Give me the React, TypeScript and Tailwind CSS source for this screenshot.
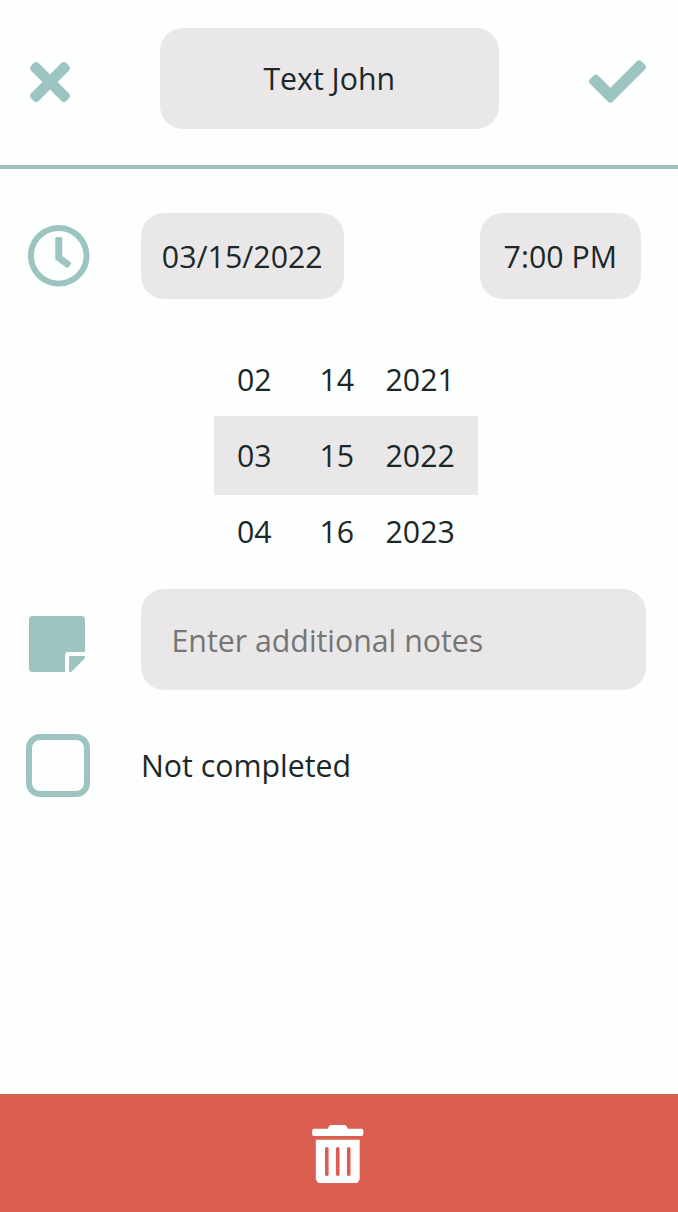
import React from "react";
import { FaCheck, FaRegClock, FaStickyNote, FaTimes, FaTrashAlt } from "react-icons/fa";

const months = ["02", "03", "04"];
const days = ["14", "15", "16"];
const years = ["2021", "2022", "2023"];

function DatePicker() {
  return (
    <div className="ml-[213.5px] mt-[41px] flex w-[264px] flex-col">
      {months.map((month, i) => (
        <div
          key={month}
          className={
            i === 1
              ? "flex h-[78.5px] items-center bg-[#e9e7e8] pt-px pl-[23.5px]"
              : i === 0
                ? "flex h-[76px] items-center pt-[3px] pl-[23.5px]"
                : "flex h-[76px] items-center pb-px pl-[23.5px]"
          }
        >
          <span className="w-[82.5px]">{month}</span>
          <span className="w-[66px]">{days[i]}</span>
          <span>{years[i]}</span>
        </div>
      ))}
    </div>
  );
}

export default function App() {
  return (
    <main className="flex h-[1212px] w-[678px] flex-col bg-[#fdfefe] font-['Open_Sans','Noto_Sans',sans-serif] text-[30.3px] leading-[40px] text-[#1c2828]">
      <header className="flex h-[169px] shrink-0 items-start justify-between border-b-4 border-[#9cc5c1] pl-[30px] pr-8 pt-[27.5px]">
        <button aria-label="Cancel" className="mt-[25.5px] text-[#9cc5c1]">
          <FaTimes className="h-[58px] w-10" />
        </button>
        <div className="ml-[-1.5px] flex h-[101.5px] w-[339px] items-center justify-center rounded-[23px] bg-[#e9e7e8] pt-0.5">
          Text John
        </div>
        <button aria-label="Save" className="ml-[-1px] mt-[25.5px] text-[#9cc5c1]">
          <FaCheck className="h-[57px] w-[57px]" />
        </button>
      </header>

      <section className="flex flex-1 flex-col pt-[43.5px]">
        <div className="flex h-[86.5px] items-center pl-[26.5px]">
          <FaRegClock className="h-[63.5px] w-[63.5px] text-[#9cc5c1]" />
          <div className="ml-[50.5px] flex h-full w-[203.5px] items-center justify-center rounded-[23px] bg-[#e9e7e8] pt-0.5">
            03/15/2022
          </div>
          <div className="ml-[135.5px] flex h-full w-[161.5px] items-center justify-center rounded-[23px] bg-[#e9e7e8] pt-0.5">
            7:00 PM
          </div>
        </div>

        <DatePicker />

        <div className="mt-[18px] flex h-[101.5px] items-center pl-[28.5px]">
          <FaStickyNote className="mt-[9px] h-16 w-14 text-[#9cc5c1]" />
          <input
            placeholder="Enter additional notes"
            className="ml-[56px] h-full w-[505.5px] rounded-[23px] bg-[#e9e7e8] px-[31px] pt-0.5 outline-none placeholder:text-[#757575] placeholder:opacity-100"
          />
        </div>

        <label className="mt-11 flex items-center pl-[26px]">
          <input
            type="checkbox"
            className="h-[63px] w-16 appearance-none rounded-[14px] border-[6px] border-[#9cc5c1]"
          />
          <span className="ml-[51px]">Not completed</span>
        </label>
      </section>

      <footer className="flex h-[118px] shrink-0 items-center justify-center bg-[#db5f50]">
        <button aria-label="Delete" className="mr-[2.5px] mt-[2px] text-white">
          <FaTrashAlt className="h-[58.5px] w-[51.5px]" />
        </button>
      </footer>
    </main>
  );
}
